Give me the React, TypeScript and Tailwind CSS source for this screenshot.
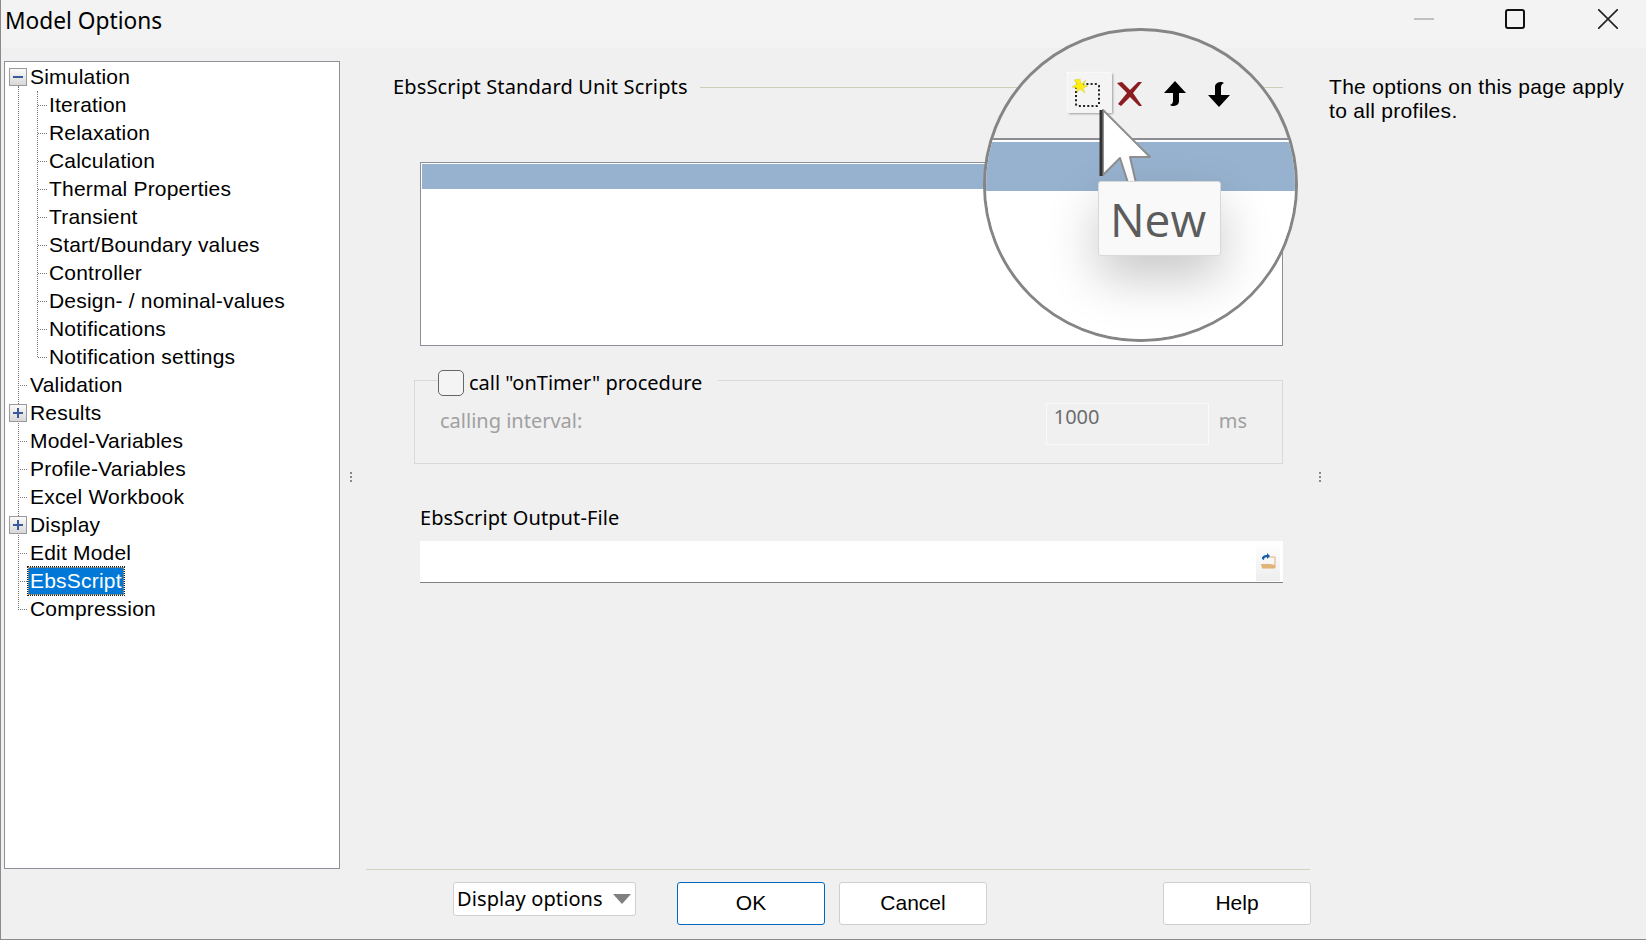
const children = [
  'Iteration',
  'Relaxation',
  'Calculation',
  'Thermal Properties',
  'Transient',
  'Start/Boundary values',
  'Controller',
  'Design- / nominal-values',
  'Notifications',
  'Notification settings',
];

function ExpandBox({ open }: { open?: boolean }) {
  return (
    <span className="absolute left-[4px] top-[5px] z-10 flex h-[18px] w-[18px] items-center justify-center border border-[#9a9a9a] bg-gradient-to-b from-[#fafafa] to-[#d8d8d8]">
      <svg width="12" height="12" viewBox="0 0 12 12">
        <rect x="1" y="5" width="10" height="2" fill="#3a5a9a" />
        {!open && <rect x="5" y="1" width="2" height="10" fill="#3a5a9a" />}
      </svg>
    </span>
  );
}

function TopRow({ label, box, open, selected }: { label: string; box?: boolean; open?: boolean; selected?: boolean }) {
  return (
    <div className="relative flex h-7 items-center pl-[23px]">
      {box ? (
        <ExpandBox open={open} />
      ) : (
        <span className="absolute left-[13px] top-1/2 w-[9px] border-t border-dotted border-[#777]" />
      )}
      <span
        className={
          selected
            ? 'border border-dotted border-[#e8902c] bg-[#0078d7] pl-[1px] pr-[1px] leading-[26px] text-white outline outline-1 outline-dotted outline-[#222]'
            : 'pl-[2px] text-black'
        }
      >
        {label}
      </span>
    </div>
  );
}

function Tree() {
  return (
    <div className="relative ml-[3px] h-[808px] w-[336px] shrink-0 border border-[#8f8f9a] bg-white pt-px font-['Liberation_Sans',sans-serif] text-[21px] tracking-[0.2px]">
      <span className="absolute bottom-[258px] left-[13px] top-[24px] border-l border-dotted border-[#777]" />
      <TopRow label="Simulation" box open />
      <div className="relative">
        <span className="absolute bottom-[14px] left-[32px] top-0 border-l border-dotted border-[#777]" />
        {children.map((c) => (
          <div key={c} className="relative flex h-7 items-center pl-[44px]">
            <span className="absolute left-[33px] top-1/2 w-[9px] border-t border-dotted border-[#777]" />
            {c}
          </div>
        ))}
      </div>
      <TopRow label="Validation" />
      <TopRow label="Results" box />
      <TopRow label="Model-Variables" />
      <TopRow label="Profile-Variables" />
      <TopRow label="Excel Workbook" />
      <TopRow label="Display" box />
      <TopRow label="Edit Model" />
      <TopRow label="EbsScript" selected />
      <TopRow label="Compression" />
    </div>
  );
}

function Grip() {
  return (
    <div className="flex flex-col gap-[2px]">
      <span className="h-[2px] w-[2px] bg-[#888]" />
      <span className="h-[2px] w-[2px] bg-[#888]" />
      <span className="h-[2px] w-[2px] bg-[#888]" />
    </div>
  );
}

function Magnifier() {
  return (
    <div className="absolute left-[982px] top-[28px] z-20 h-[314px] w-[315px] overflow-hidden rounded-full border-[3px] border-[#858585] bg-[#f0f0f0]">
      <div className="h-[107px]" />
      <div className="h-[2px] bg-[#8d8d95]" />
      <div className="h-[2px] bg-white" />
      <div className="h-[49px] bg-[#97b2cf]" />
      <div className="h-[150px] bg-white" />

      {/* toolbar, in magnified coordinates */}
      <div className="absolute left-[82px] top-[42px] flex h-10 w-[44px] items-center justify-center bg-[#f4f4f4] shadow-[1px_1px_2px_rgba(0,0,0,0.35),-1px_-1px_1px_rgba(255,255,255,0.9)]">
        <svg className="-ml-[8px]" width="30" height="30" viewBox="0 0 30 30">
          <rect x="5" y="6" width="23" height="22" rx="2" fill="none" stroke="#222" strokeWidth="2" strokeDasharray="2 2.2" />
          <path d="M9 1l1 5 5-4-3 5 5 1-5 2 2 5-5-4-3 4 0-5-5-1 5-3-3-4z" fill="#ffee10" stroke="#c9c23a" strokeWidth="0.4" />
        </svg>
      </div>
      <svg className="absolute left-[130px] top-[50px]" width="28" height="26" viewBox="0 0 28 26">
        <path d="M1 2l5-1 8 8 8-8 4 0-9 11 9 13h-3l-9-9-9 9-3-2 9-11z" fill="#8b1c1f" />
      </svg>
      <svg className="absolute left-[177px] top-[50px]" width="24" height="26" viewBox="0 0 24 26">
        <path d="M12 0l11 12h-7v8c0 3-2 5-7 5l-2-1c2-1 3-2 3-4v-8H1z" fill="#000" />
      </svg>
      <svg className="absolute left-[221px] top-[50px]" width="24" height="26" viewBox="0 0 24 26">
        <path d="M12 26L1 14h7V6c0-3 2-5 7-5l2 1c-2 1-3 2-3 4v8h9z" fill="#000" />
      </svg>

      {/* mouse pointer */}
      <svg className="absolute left-[111px] top-[77px]" width="54" height="78" viewBox="0 0 54 78">
        <path d="M6 2v65l17-17 8 25h8l-6-26h20z" fill="#fff" stroke="#8f8f8f" strokeWidth="2" strokeLinejoin="round" />
        <path d="M4 2v66" stroke="#333" strokeWidth="3" />
      </svg>

      <div className="absolute left-[112px] top-[150px] flex h-[75px] w-[123px] items-center justify-center rounded-[3px] border border-[#d8d8d8] bg-[#f9f9f9] pr-[3px] font-['Open_Sans',sans-serif] text-[46px] leading-none text-[#5c5c5c] shadow-[0_22px_50px_rgba(0,0,0,0.22)]">
        New
      </div>
    </div>
  );
}

function FolderIcon() {
  return (
    <div className="flex h-10 w-6 items-center justify-center bg-gradient-to-b from-white to-[#eeeeee]">
      <svg width="16" height="16" viewBox="0 0 16 16">
        <path d="M6 4h9v11H2" fill="none" stroke="#e0b070" strokeWidth="1" />
        <path d="M1 11h9l5 1v3H2z" fill="#dfb476" />
        <path d="M2 6c0-3 2-4 5-4V0l3 3-3 3V4C5 4 4 5 4 7z" fill="#0f5fb0" />
      </svg>
    </div>
  );
}

function PushButton({ label, primary }: { label: string; primary?: boolean }) {
  return (
    <button
      className={
        'h-[43px] w-[148px] rounded-[3px] border bg-white pb-px text-[21px] text-black ' +
        (primary ? 'border-[#0067c0]' : 'border-[#cfcfcf]')
      }
    >
      {label}
    </button>
  );
}

function Middle() {
  return (
    <div className="flex w-[944px] shrink-0 flex-col">
      <div className="flex-1 pl-[27px] pr-[27px] font-['Noto_Sans',sans-serif] text-[20px] text-black">
        <div className="flex h-[30px] items-center gap-3 pt-[22px] tracking-[0.15px]">
          <span className="whitespace-nowrap">EbsScript Standard Unit Scripts</span>
          <span className="flex-1 border-t border-[#cfcfb8]" />
        </div>
        <div className="ml-[27px] mt-[71px] h-[184px] border border-[#8a8f98] bg-white p-px">
          <div className="h-[25px] bg-[#97b2cf]" />
        </div>
        <div className="relative ml-[21px] mt-[34px] h-[84px] border border-[#d9d9d9]">
          <div className="absolute -top-[11px] left-[23px] flex items-center gap-[5px] bg-[#f0f0f0] pr-4">
            <span className="h-[26px] w-[26px] rounded-[5px] border border-[#666] bg-[#f4f4f4]" />
            <span className="leading-[26px]">call "onTimer" procedure</span>
          </div>
          <div className="flex h-full items-start pl-[25px] pr-[35px] pt-[25px] text-[#a0a0a0]">
            <span className="flex-1">calling interval:</span>
            <div className="-mt-[3px] ml-[2px] mr-[10px] h-[42px] w-[163px] border border-[#fafafa] pl-[7px] leading-[26px] text-[#6d6d6d]">1000</div>
            <span>ms</span>
          </div>
        </div>
        <div className="ml-[27px] mt-[40px] leading-[28px] tracking-[0.1px]">EbsScript Output-File</div>
        <div className="ml-[27px] mt-[9px] flex h-[42px] justify-end border-b border-[#808080] bg-white pr-[3px]">
          <FolderIcon />
        </div>
      </div>
      <div className="flex h-[70px] items-start border-t border-[#d2d2c0] pt-[12px] font-['Liberation_Sans',sans-serif]">
        <div className="ml-[87px] mr-[41px] flex h-[34px] w-[183px] items-center justify-between rounded-[3px] border border-[#cfcfcf] bg-white pl-[3px] pr-[4px] font-['Noto_Sans',sans-serif] text-[20px] tracking-[0.1px]">
          Display options
          <svg width="18" height="10" viewBox="0 0 18 10">
            <path d="M0 0h18l-9 10z" fill="#808080" />
          </svg>
        </div>
        <PushButton label="OK" primary />
        <div className="w-[14px]" />
        <PushButton label="Cancel" />
        <div className="flex-1" />
        <div className="-mr-px">
          <PushButton label="Help" />
        </div>
      </div>
    </div>
  );
}

export default function App() {
  return (
    <div className="relative flex h-[940px] w-[1646px] flex-col overflow-hidden border-b border-l border-[#8a8a8a] bg-[#f0f0f0] text-black">
      <div className="flex h-[48px] items-center justify-between bg-[#f3f3f3] pl-1 font-['Noto_Sans',sans-serif] text-[22.7px]">
        <span className="-mt-[5px]">Model Options</span>
        <div className="flex items-center pb-[11px] pr-[28px]">
          <span className="mr-[71px] h-[2px] w-5 bg-[#c0c0c0]" />
          <span className="mr-[73px] h-5 w-5 rounded-[3px] border-2 border-[#111]" />
          <svg width="20" height="20" viewBox="0 0 20 20">
            <path d="M0 0l20 20M20 0L0 20" stroke="#222" strokeWidth="1.6" />
          </svg>
        </div>
      </div>
      <div className="flex flex-1 pt-[13px]">
        <Tree />
        <div className="flex h-[864px] w-[26px] shrink-0 items-center justify-center pb-[32px] pr-[5px]">
          <Grip />
        </div>
        <Middle />
        <div className="flex h-[864px] w-[19px] shrink-0 items-center justify-center pb-[32px]">
          <Grip />
        </div>
        <p className="pt-[14px] font-['Liberation_Sans',sans-serif] text-[21px] leading-[24px] tracking-[0.3px]">
          The options on this page apply
          <br />
          to all profiles.
        </p>
      </div>
      <Magnifier />
    </div>
  );
}
